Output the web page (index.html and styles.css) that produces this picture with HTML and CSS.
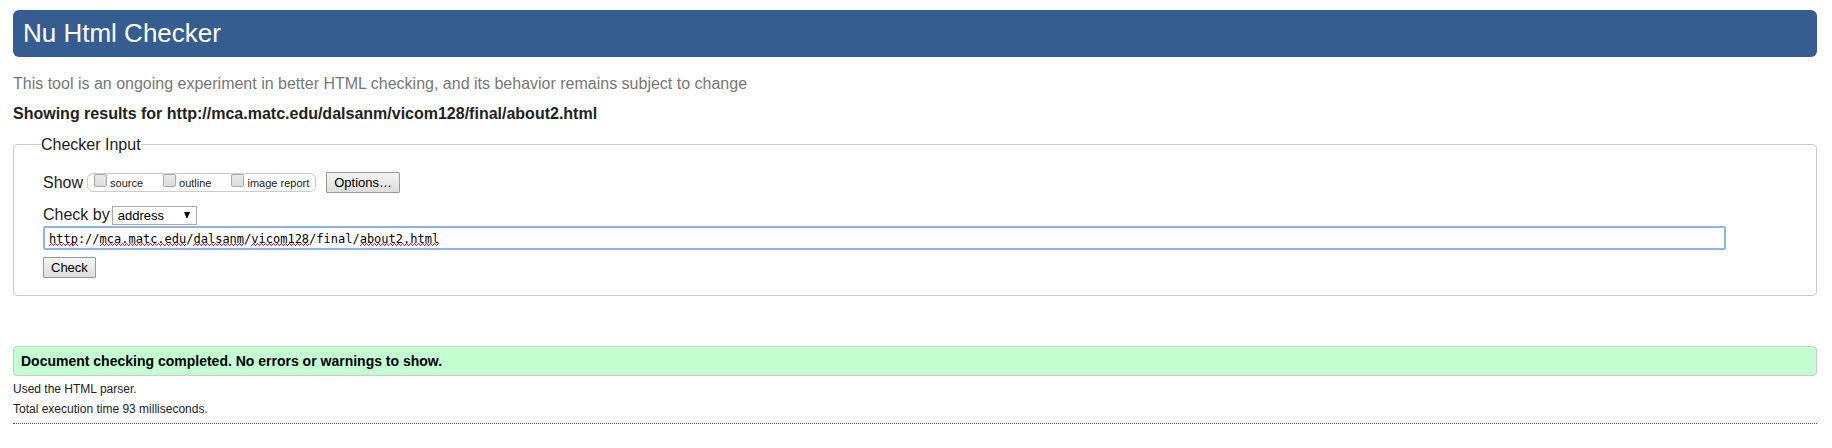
FILE: index.html
```html
<!DOCTYPE html>
<html lang="en">
<head>
<meta charset="utf-8">
<title>Nu Html Checker</title>
<link rel="stylesheet" href="styles.css">
</head>
<body>
<header class="banner"><h1 class="banner-title">Nu Html Checker</h1></header>
<main>
<p class="tagline">This tool is an ongoing experiment in better HTML checking, and its behavior remains subject to change</p>
<h2 class="subject">Showing results for http://mca.matc.edu/dalsanm/vicom128/final/about2.html</h2>
<form>
<fieldset class="checker">
<legend class="checker-legend">Checker Input</legend>
<div class="show-row">
<span>Show</span>
<div class="show-options">
<label class="option"><input class="tick" type="checkbox">source</label>
<label class="option"><input class="tick" type="checkbox">outline</label>
<label class="option"><input class="tick" type="checkbox">image report</label>
</div>
<button class="button" type="button">Options…</button>
</div>
<div class="method-row">
<label for="method">Check by</label>
<div class="select-wrap">
<select class="method" id="method"><option>address</option></select>
<svg class="arrow" viewBox="0 0 6 6" aria-hidden="true"><path d="M0 0h6L3.5 6h-1z"/></svg>
</div>
</div>
<div class="address-wrap">
<input class="address" type="text" aria-label="Address" value="http://mca.matc.edu/dalsanm/vicom128/final/about2.html">
<div class="spelling" aria-hidden="true">
<span class="wave chars-4"></span>
<span class="skip chars-3"></span>
<span class="wave chars-12"></span>
<span class="skip chars-1"></span>
<span class="wave chars-7"></span>
<span class="skip chars-1"></span>
<span class="wave chars-8"></span>
<span class="skip chars-7"></span>
<span class="wave chars-11"></span>
</div>
</div>
<button class="button" type="submit">Check</button>
</fieldset>
</form>
<p class="success">Document checking completed. No errors or warnings to show.</p>
<p class="detail">Used the HTML parser.</p>
<p class="detail">Total execution time 93 milliseconds.</p>
</main>
<hr class="rule">
</body>
</html>
```

FILE: styles.css
```css
* { box-sizing: border-box; }
body {
  margin: 10px 15px 10px 13px;
  background: #fff;
  color: #222;
  font: 16px/20px "Liberation Sans", Arial, sans-serif;
}
p, h1, h2 { margin: 0; }
.banner {
  padding: 8px 10px 9px;
  border-radius: 6px;
  background: #365d90;
}
.banner-title {
  color: #fff;
  font-size: 26px;
  font-weight: 400;
  line-height: 30px;
}
.tagline { margin-top: 17px; color: #777; }
.subject { margin: 10px 0; font-size: 16px; }
.checker {
  min-width: 0;
  margin: 0;
  padding: 17px 29px 17px;
  border: 1px solid #ccc;
  border-radius: 4px;
}
.checker-legend { margin-left: -2px; padding: 1px 0 0; }
.show-row { display: flex; align-items: center; gap: 4px; }
.show-options {
  display: flex;
  gap: 20px;
  height: 19px;
  margin-right: 6px;
  padding: 0 6px;
  border: 1px solid #ccc;
  border-radius: 6px;
}
.option {
  display: flex;
  gap: 3px;
  font-size: 11px;
  line-height: 19px;
}
.tick {
  appearance: none;
  width: 13px;
  height: 13px;
  margin: 0;
  border: 1px solid #aaa;
  border-radius: 2px;
  background: linear-gradient(#e8e8e8, #dcdcdc);
}
.button {
  padding: 0 7px;
  border: 1px solid #999;
  border-radius: 1px;
  background: linear-gradient(#f5f5f5, #ddd);
  color: #000;
  font: 13px/19px "Liberation Sans", Arial, sans-serif;
}
.method-row {
  display: flex;
  align-items: center;
  gap: 2px;
  margin-top: 12px;
}
.select-wrap { position: relative; display: flex; }
.method {
  appearance: none;
  width: 85px;
  height: 19px;
  padding: 0 5px;
  border: 1px solid #a9a9a9;
  border-radius: 0;
  background: #fff;
  color: #000;
  font: 13px/17px "Liberation Sans", Arial, sans-serif;
}
.arrow {
  position: absolute;
  top: 6px;
  right: 7px;
  width: 6px;
  height: 6px;
  pointer-events: none;
}
.address-wrap {
  position: relative;
  margin: 1px 61px 7px 0;
  font: 12px/16px "DejaVu Sans Mono", monospace;
}
.address {
  display: block;
  width: 100%;
  height: 24px;
  padding: 2px 4px 0;
  border: 2px solid #8fb3ee;
  border-radius: 2px;
  outline: 0;
  background: #fff;
  color: #000;
  font: inherit;
}
.spelling {
  position: absolute;
  top: 17px;
  left: 6px;
  display: flex;
  pointer-events: none;
}
.wave, .skip { height: 3px; }
.wave {
  background:
    conic-gradient(from 0deg at 1px 1px, transparent 75%, #e8102e 0) 0 2px / 4px 3px repeat-x,
    conic-gradient(from 0deg at 1px 1px, transparent 75%, #e8102e 0) 1px 1px / 2px 3px repeat-x,
    conic-gradient(from 0deg at 1px 1px, transparent 75%, #e8102e 0) 2px 0 / 4px 3px repeat-x;
}
.chars-1 { width: 1ch; }
.chars-3 { width: 3ch; }
.chars-4 { width: 4ch; }
.chars-7 { width: 7ch; }
.chars-8 { width: 8ch; }
.chars-11 { width: 11ch; }
.chars-12 { width: 12ch; }
.success {
  margin: 50px 0 3px;
  padding: 4px 7px;
  border: 1px solid #ccc;
  border-radius: 4px;
  background: #c3ffd0;
  color: #000;
  font-size: 14px;
  font-weight: 700;
}
.detail { font-size: 12px; }
.rule { margin: 4px 0 0; border: 0; border-top: 1px dotted #555; }
```
